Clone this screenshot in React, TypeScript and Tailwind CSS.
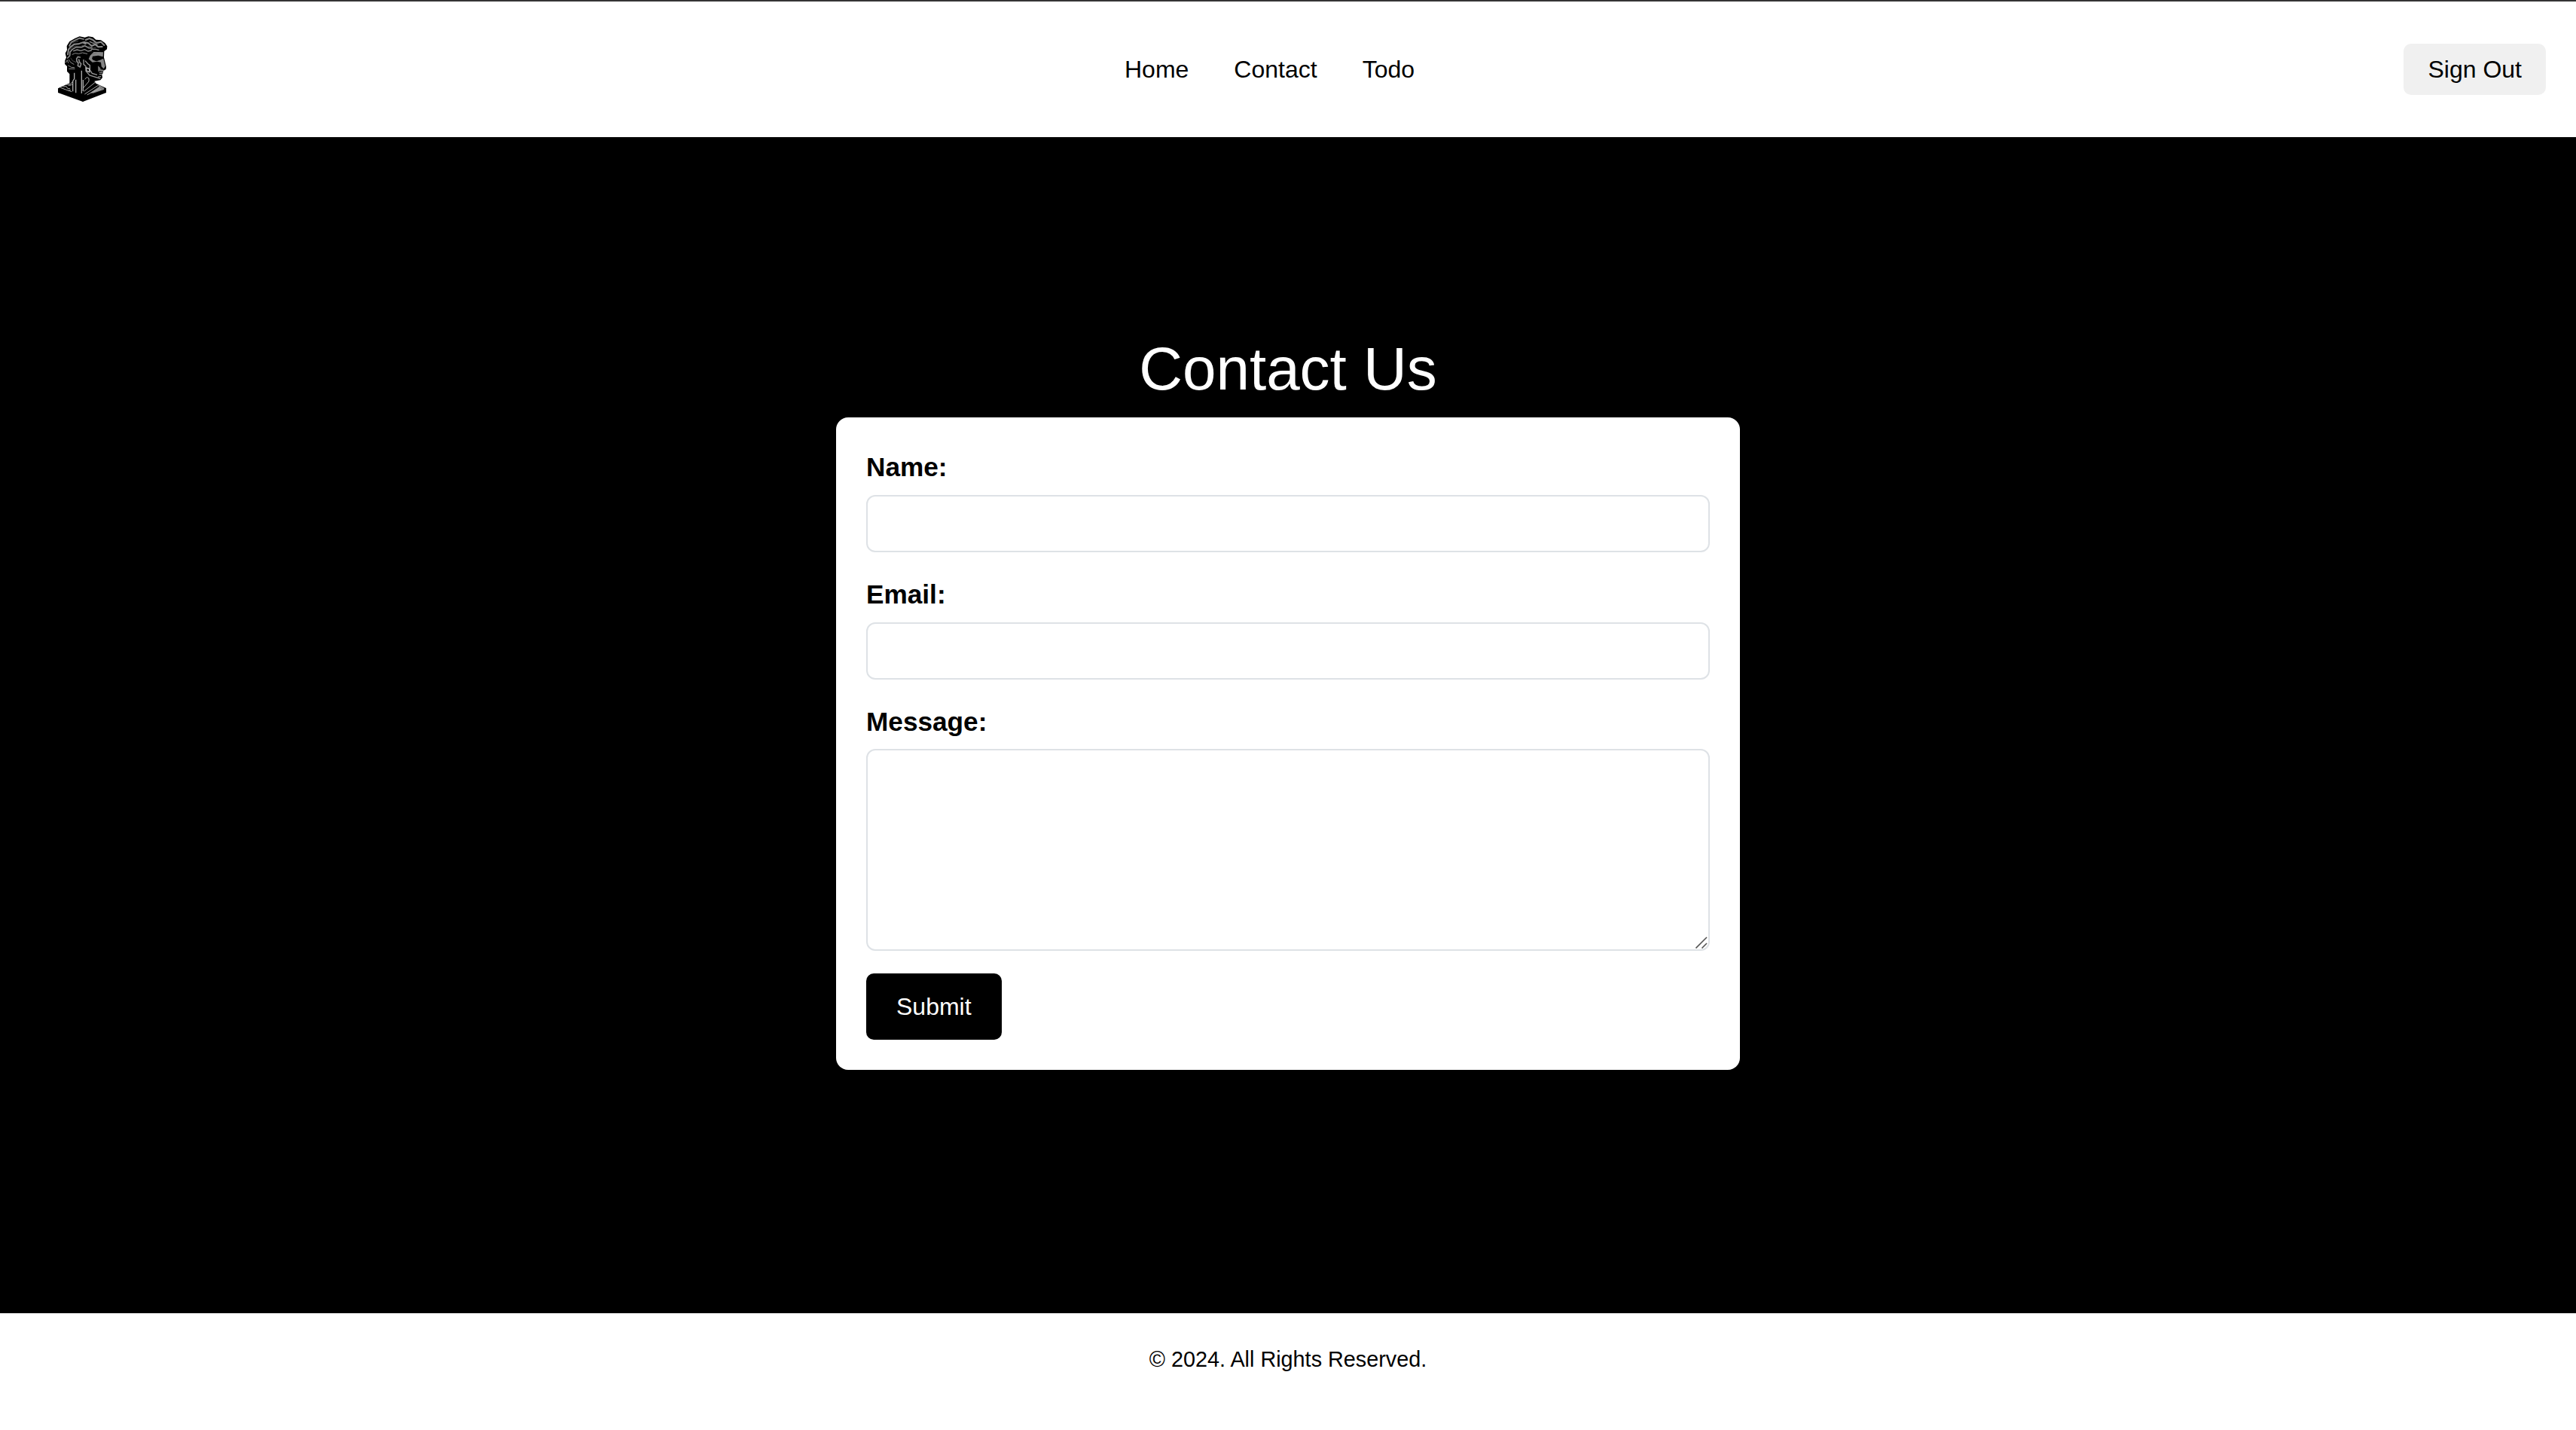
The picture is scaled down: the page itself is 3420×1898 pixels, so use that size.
function Logo() {
  return (
    <svg className="-mt-1 ml-[60px] h-[110px] w-[100px]" viewBox="0 0 300 330" fill="none" aria-label="Classical bust">
      <path
        fill="#000"
        d="M118 48L137 40L158 44L172 40L190 43L202 53L222 55L238 66L247 79L246 91L235 99L234 124L243 161L242 171L232 176L230 187L226 192L228 204L220 214L196 218L202 227L243 246V264L150 300L51 264V247L97 226V190L87 179V159L78 150L79 135L84 124L80 107L87 94L86 78L97 60Z"
      />
      <g stroke="#8c8c8c" strokeWidth="5" strokeLinejoin="round" strokeLinecap="round">
        <path d="M96 78L104 63L120 55L136 47L153 51" />
        <path d="M90 112L93 92L101 82L116 71L132 70L149 64L161 69" strokeWidth="6" />
        <path d="M89 126L98 117L99 102L108 92L124 82L144 83L158 77L174 86L187 86" />
        <path d="M113 98L127 93L142 97L157 92L170 99L184 96" strokeWidth="4" />
        <path d="M161 54L176 48L190 54L204 66L222 62L235 75" strokeWidth="6" />
        <path d="M154 62L172 67L185 78L199 72L211 82L227 81" strokeWidth="6" />
        <path d="M178 61L195 69L207 73M184 91L202 91L213 94" strokeWidth="4" />
        <path d="M82 144L88 134L92 145M94 133L101 143L114 151M92 156L104 163L116 164M95 169H117" strokeWidth="3" />
        <path d="M108 112L119 107L134 109L148 105L167 109" strokeWidth="3" />
        <path d="M139 123L130 121L125 129L126 139L132 146L130 157L139 162L143 149L137 143L134 132" strokeWidth="5" />
      </g>
      <path fill="#858585" d="M193 102L214 102L231 103L230 121L211 116L189 119L186 130L201 137L225 130L232 130L239 159L233 169L224 160L222 143L207 140L188 143L173 130L179 116Z" />
      <path fill="#000" d="M190 125L205 121L229 124L224 132L205 139L190 134Z" />
      <path stroke="#999" strokeWidth="4" d="M153 132V151L162 159V178L177 195L220 208M159 137L170 149L178 155V174L187 187L207 193" />
      <path stroke="#bbb" strokeWidth="4" d="M163 165L176 169V182L165 177Z" />
      <path fill="#777" d="M210 157L220 166V171L236 174L229 180L218 177L211 180Z" />
      <path stroke="#aaa" strokeWidth="3" d="M215 183L230 184M215 191L227 190M210 201L222 200" />
      <path fill="#818181" d="M214 232L235 246L234 252L191 266L180 264L214 240Z" />
      <g stroke="#aaa" strokeWidth="4">
        <path d="M116 185V209L110 218V259M122 212V265M145 176V267M151 213V258" />
        <path d="M158 211L166 202L174 207V219L151 246M154 259L200 222M157 270L214 233M167 273L219 244M184 264L222 250" strokeWidth="3" />
        <path d="M61 244L82 252L106 260M70 240L84 239L90 248L99 248M84 232L101 230L110 219M92 235L104 234L110 228M92 257L101 253" strokeWidth="3" />
      </g>
      <path stroke="#000" strokeWidth="4" d="M132 190V283M139 182V286M150 285V299" />
      <path stroke="#666" strokeWidth="2" d="M103 68L116 62L132 58M98 93L110 83L122 78M145 77L161 75M164 83L178 79L190 87L203 84M191 64L213 69M101 125L109 137L123 143M185 111L205 107" />
    </svg>
  );
}

const inputClass = "block h-[76px] w-full rounded-[12px] border-2 border-[#dee2e6] bg-white px-6 text-[32px] outline-none";
const labelClass = "block text-[35.2px] font-bold leading-[52.8px]";

export default function App() {
  return (
    <div className="flex h-[1898px] w-full flex-col bg-white font-['Liberation_Sans',Arial,sans-serif] text-[32px] text-black">
      <header className="grid h-[182px] shrink-0 grid-cols-[1493px_1fr_auto] items-center border-t-2 border-[#353435] pr-10">
        <Logo />
        <nav className="flex gap-[60px] leading-[48px]">
          <a href="#home">Home</a>
          <a href="#contact">Contact</a>
          <a href="#todo">Todo</a>
        </nav>
        <button className="h-[68px] rounded-[10px] bg-[#f0f0f0] px-8 leading-[36px]">Sign Out</button>
      </header>

      <main className="flex h-[1561px] shrink-0 flex-col items-center bg-black pt-[260px]">
        <h1 className="mb-4 text-[80px] leading-[96px] text-white">Contact Us</h1>
        <form className="h-[866px] w-[1200px] rounded-[16px] bg-white px-10 pt-10">
          <div className="mb-[30px]">
            <label htmlFor="name" className={labelClass}>Name:</label>
            <input id="name" type="text" className={`mt-[10px] ${inputClass}`} />
          </div>
          <div className="mb-[30px]">
            <label htmlFor="email" className={labelClass}>Email:</label>
            <input id="email" type="email" className={`mt-[10px] ${inputClass}`} />
          </div>
          <div className="mb-[30px]">
            <label htmlFor="message" className={labelClass}>Message:</label>
            <div className="relative mt-[10px]">
              <textarea
                id="message"
                className="block h-[268px] w-full resize-none rounded-[12px] border-2 border-[#dee2e6] bg-white px-6 py-3 text-[32px] outline-none"
              />
              <svg className="pointer-events-none absolute right-[3px] bottom-[3px] h-4 w-4" viewBox="0 0 16 16" stroke="#555" strokeWidth="1.6">
                <path d="M0.5 15.5L15 1M8.5 15.5L15 9" />
              </svg>
            </div>
          </div>
          <button type="button" className="h-[88px] rounded-[10px] bg-black px-10 leading-[48px] text-white">Submit</button>
        </form>
      </main>

      <footer className="flex flex-1 justify-center pt-10">
        <p className="text-[28.8px] leading-[43px]">© 2024. All Rights Reserved.</p>
      </footer>
    </div>
  );
}
